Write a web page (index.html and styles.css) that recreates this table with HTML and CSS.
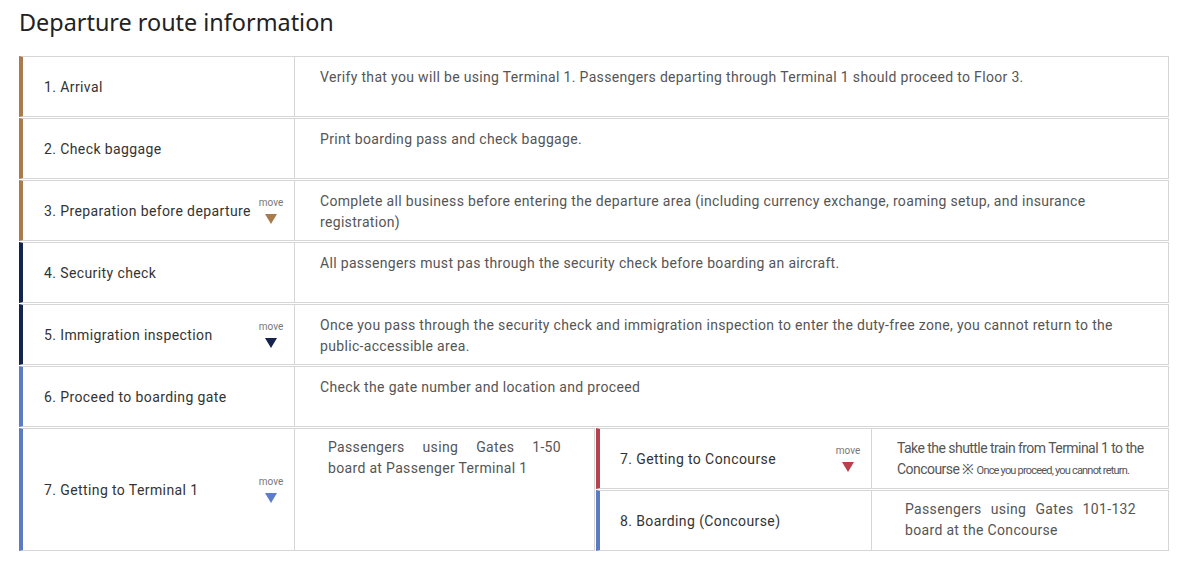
FILE: index.html
```html
<!DOCTYPE html>
<html lang="en">
<head>
<meta charset="utf-8">
<title>Departure route information</title>
<link rel="stylesheet" href="styles.css">
</head>
<body>
<div class="page">
  <h1 class="title">Departure route information</h1>
  <div class="steps">
    <div class="step step--brown">
      <div class="step__label"><span>1. Arrival</span></div>
      <div class="step__desc">Verify that you will be using Terminal 1. Passengers departing through Terminal 1 should proceed to Floor 3.</div>
    </div>
    <div class="step step--brown">
      <div class="step__label"><span>2. Check baggage</span></div>
      <div class="step__desc">Print boarding pass and check baggage.</div>
    </div>
    <div class="step step--brown">
      <div class="step__label"><span>3. Preparation before departure</span>
        <div class="move move--brown"><span class="move__text">move</span><span class="move__arrow"></span></div>
      </div>
      <div class="step__desc">Complete all business before entering the departure area (including currency exchange, roaming setup, and insurance registration)</div>
    </div>
    <div class="step step--navy">
      <div class="step__label"><span>4. Security check</span></div>
      <div class="step__desc">All passengers must pas through the security check before boarding an aircraft.</div>
    </div>
    <div class="step step--navy">
      <div class="step__label"><span>5. Immigration inspection</span>
        <div class="move move--navy"><span class="move__text">move</span><span class="move__arrow"></span></div>
      </div>
      <div class="step__desc">Once you pass through the security check and immigration inspection to enter the duty-free zone, you cannot return to the public-accessible area.</div>
    </div>
    <div class="step step--blue">
      <div class="step__label"><span>6. Proceed to boarding gate</span></div>
      <div class="step__desc">Check the gate number and location and proceed</div>
    </div>
    <div class="split">
      <div class="step step--blue step--tall">
        <div class="step__label"><span>7. Getting to Terminal 1</span>
          <div class="move move--blue"><span class="move__text">move</span><span class="move__arrow"></span></div>
        </div>
        <div class="step__desc step__desc--mid"><span class="jline">Passengers using Gates 1-50</span>board at Passenger Terminal 1</div>
      </div>
      <div class="split__sub">
        <div class="step step--red step--sub">
          <div class="step__label step__label--sub"><span>7. Getting to Concourse</span>
            <div class="move move--red"><span class="move__text">move</span><span class="move__arrow"></span></div>
          </div>
          <div class="step__desc step__desc--cond">Take the shuttle train from Terminal 1 to the<br>Concourse ※ <span class="note">Once you proceed, you cannot return.</span></div>
        </div>
        <div class="step step--blue step--sub">
          <div class="step__label step__label--sub"><span>8. Boarding (Concourse)</span></div>
          <div class="step__desc step__desc--board"><span class="jline">Passengers using Gates 101-132</span>board at the Concourse</div>
        </div>
      </div>
    </div>
  </div>
</div>
</body>
</html>
```

FILE: styles.css
```css
* { box-sizing: border-box; }
body {
  margin: 0;
  background: #fff;
  font-family: Roboto, "Liberation Sans", sans-serif;
}
.page {
  width: 1169px;
  padding: 6px 0 0 19px;
}
.title {
  margin: 0 0 17px;
  font-family: "Noto Sans", "Open Sans", sans-serif;
  font-weight: 400;
  font-size: 23.4px;
  line-height: 33px;
  color: #222;
}
.steps {
  display: flex;
  flex-direction: column;
  gap: 1px;
}
.step {
  display: flex;
  height: 61px;
  border: 1px solid #d6d6d6;
  border-left: 4px solid #a87a4c;
}
.step--brown { border-left-color: #a87a4c; }
.step--navy { border-left-color: #13254f; }
.step--blue { border-left-color: #5b7bc2; }
.step--red { border-left-color: #b4434f; }

.step__label {
  width: 272px;
  flex: none;
  display: flex;
  align-items: center;
  justify-content: space-between;
  padding: 2px 9px 0 21px;
  border-right: 1px solid #d6d6d6;
  font-size: 14px;
  line-height: 21px;
  letter-spacing: 0.4px;
  color: #333;
}
.step__label--sub { padding-left: 20px; }
.step__desc {
  flex: 1;
  padding: 10px 20px 0 25px;
  font-size: 14px;
  line-height: 21px;
  letter-spacing: 0.33px;
  color: #555;
}
.move {
  display: flex;
  flex-direction: column;
  align-items: center;
  width: 28px;
  margin-top: -2px;
  letter-spacing: 0;
}
.move__text {
  font-size: 10px;
  line-height: 12px;
  color: #777;
}
.move__arrow {
  margin-top: 5px;
  width: 0;
  height: 0;
  border-left: 6px solid transparent;
  border-right: 6px solid transparent;
  border-top: 10px solid #a87a4c;
}
.move--brown .move__arrow { border-top-color: #a87a4c; }
.move--navy .move__arrow { border-top-color: #14244c; }
.move--blue .move__arrow { border-top-color: #5b7ec8; }
.move--red .move__arrow { border-top-color: #b8404f; }

.split {
  display: flex;
  gap: 1px;
}
.step--tall {
  width: 576px;
  flex: none;
  height: auto;
}
.split__sub {
  flex: 1;
  display: flex;
  flex-direction: column;
  gap: 1px;
}
.step__desc--mid {
  padding: 8px 33px 0 33px;
  text-align: justify;
}
.jline {
  display: block;
  text-align: justify;
  text-align-last: justify;
}
.step__desc--cond {
  padding: 9px 10px 0 25px;
  letter-spacing: -0.55px;
}
.note {
  font-size: 11px;
  letter-spacing: -0.8px;
}
.step__desc--board {
  padding: 8px 32px 0 33px;
}
```
